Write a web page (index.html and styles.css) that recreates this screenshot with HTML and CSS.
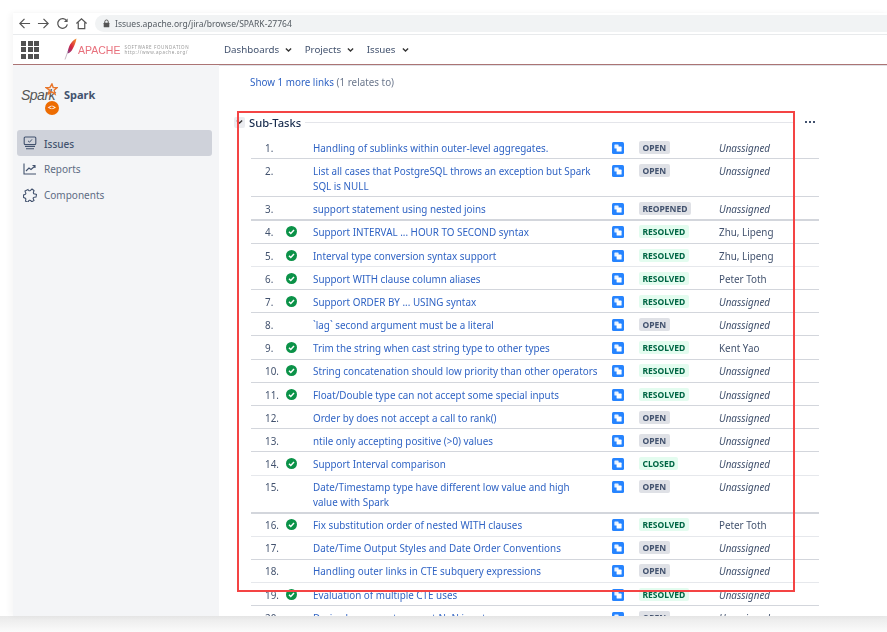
FILE: index.html
```html
<!DOCTYPE html>
<html lang="en">
<head>
<meta charset="utf-8">
<title>SPARK-27764</title>
<link rel="stylesheet" href="styles.css">
</head>
<body>
<svg class="defs" width="0" height="0" aria-hidden="true">
  <symbol id="story" viewBox="0 0 12 12"><rect width="12" height="12" rx="1.5" fill="#2684ff"/><rect x="2.4" y="2.4" width="4.2" height="4.2" rx=".6" fill="#fff" opacity=".9"/><rect x="4.6" y="4.6" width="5" height="5" rx=".6" fill="#fff"/></symbol>
  <symbol id="done" viewBox="0 0 11 11"><circle cx="5.5" cy="5.5" r="5.5" fill="#0b9248"/><path d="M3 5.7l1.8 1.8L8 4.1" fill="none" stroke="#fff" stroke-width="1.5"/></symbol>
  <symbol id="chev" viewBox="0 0 8 6"><path d="M1 1.2l3 3 3-3" fill="none" stroke="#333" stroke-width="1.5"/></symbol>
</svg>
<div class="window">
  <div class="toolbar">
    <svg class="nav" viewBox="0 0 14 14"><path d="M13 7H2M7 2L2 7l5 5" fill="none" stroke="#555" stroke-width="1.3"/></svg>
    <svg class="nav" viewBox="0 0 14 14"><path d="M1 7h11M7 2l5 5-5 5" fill="none" stroke="#555" stroke-width="1.3"/></svg>
    <svg class="nav" viewBox="0 0 14 14"><path d="M11.5 4.2A5.2 5.2 0 1 0 12.2 8" fill="none" stroke="#555" stroke-width="1.3"/><path d="M12.5 1.5v4h-4z" fill="#555"/></svg>
    <svg class="nav" viewBox="0 0 14 14"><path d="M1.5 7L7 2l5.5 5M3.5 6v6.5h7V6" fill="none" stroke="#555" stroke-width="1.3"/></svg>
    <div class="omnibox">
      <svg class="lock" viewBox="0 0 8 10"><path d="M2 4.500V3a2 2 0 0 1 4 0v1.500" fill="none" stroke="#555" stroke-width="1.100"/><rect x=".8" y="4" width="6.400" height="5.400" rx=".8" fill="#555"/></svg>
      <span class="url">Issues.apache.org/jira/browse/SPARK-27764</span>
    </div>
  </div>
  <header class="topbar">
    <div class="apps"><i></i><i></i><i></i><i></i><i></i><i></i><i></i><i></i><i></i></div>
    <div class="asf">
      <svg class="feather" viewBox="0 0 14 22"><defs><linearGradient id="fg" x1="0" y1="1" x2="1" y2="0"><stop offset="0" stop-color="#7b3a8c"/><stop offset=".45" stop-color="#d8263f"/><stop offset="1" stop-color="#f59a2c"/></linearGradient></defs><path d="M12.500.5C8.500 2 5.200 6.500 3.800 13l-.4 2.500c2.200-.5 4-2 5.200-4.500C10.500 8 11.800 4 12.500.5z" fill="url(#fg)"/><path d="M4 13L1 21.500" stroke="#b9a9b5" stroke-width=".8"/></svg>
      <span class="asf-name">APACHE</span>
      <span class="asf-sub"><span>SOFTWARE FOUNDATION</span><span>http://www.apache.org/</span></span>
    </div>
    <nav class="menu">
      <span class="menu-item">Dashboards <svg class="chev"><use href="#chev"/></svg></span>
      <span class="menu-item">Projects <svg class="chev"><use href="#chev"/></svg></span>
      <span class="menu-item">Issues <svg class="chev"><use href="#chev"/></svg></span>
    </nav>
  </header>
  <div class="body">
    <aside class="sidebar">
      <div class="project">
        <div class="spark-logo">
          <span class="spark-word">Spark</span>
          <svg class="spark-star" viewBox="0 0 14 14"><path d="M7.500 1l1.300 3.800 4.200.2-3.200 2.700 1.100 4.300-3.700-2.400-3.600 2.200 1.200-4.200L1 5l4.300-.2z" fill="none" stroke="#e8762b" stroke-width="1.500"/></svg>
          <span class="spark-badge">&lt;&gt;</span>
        </div>
        <span class="project-name">Spark</span>
      </div>
      <a class="side-item active">
        <svg class="side-icon" viewBox="0 0 14 14"><rect x="1.200" y="1" width="11.600" height="7.600" rx="1" fill="none" stroke="#42526e" stroke-width="1.100"/><path d="M5 4.800l1.500 1.400L9 3.400" fill="none" stroke="#42526e"/><path d="M2 10.500h10M3 12.800h8" stroke="#42526e" stroke-width="1.100"/></svg>
        <span class="side-label">Issues</span>
      </a>
      <a class="side-item">
        <svg class="side-icon" viewBox="0 0 14 14"><path d="M1 1.500V12h12" fill="none" stroke="#42526e" stroke-width="1.100"/><path d="M3 9l3-3 2 1.500L12 4M9.500 3.500H12V6" fill="none" stroke="#42526e" stroke-width="1.100"/></svg>
        <span>Reports</span>
      </a>
      <a class="side-item">
        <svg class="side-icon" viewBox="0 0 14 14"><path d="M5 1.500c.3 1.300 1.600 1.700 2.500.8L9 1l2 1.500-.6 2c-.2 1 .8 1.700 1.700 1.500l1.400.5-.5 2.500-1.800.2c-1 .2-1.300 1.300-.7 2l.5 1.300-2.200 1.200-1.200-1.200c-.8-.6-1.800-.3-2 .6l-.6 1.100-2.500-1 .3-1.800c.2-.9-.6-1.600-1.500-1.500L.5 9.500V7l1.500-.5c.9-.3 1.100-1.300.5-2L2 3z" fill="none" stroke="#42526e" stroke-width="1.100"/></svg>
        <span>Components</span>
      </a>
    </aside>
    <main class="content">
      <div class="more"><a class="link">Show 1 more links</a> <span class="muted">(1 relates to)</span></div>
      <div class="module-head">
        <span class="twisty"><svg class="chev"><use href="#chev"/></svg></span>
        <h2 class="module-title">Sub-Tasks</h2>
        <span class="module-rule"></span>
        <span class="dots"><i></i><i></i><i></i></span>
      </div>
      <div class="tasks">
        <div class="row"><span class="num">1.</span><span class="tick"></span><a class="link">Handling of sublinks within outer-level aggregates.</a><svg class="type"><use href="#story"/></svg><span class="cell-s"><span class="loz open">OPEN</span></span><span class="who none">Unassigned</span></div>
        <div class="row tall"><span class="num">2.</span><span class="tick"></span><a class="link">List all cases that PostgreSQL throws an exception but Spark SQL is NULL</a><svg class="type"><use href="#story"/></svg><span class="cell-s"><span class="loz open">OPEN</span></span><span class="who none">Unassigned</span></div>
        <div class="row thick"><span class="num">3.</span><span class="tick"></span><a class="link">support statement using nested joins</a><svg class="type"><use href="#story"/></svg><span class="cell-s"><span class="loz open">REOPENED</span></span><span class="who none">Unassigned</span></div>
        <div class="row up"><span class="num">4.</span><svg class="tick"><use href="#done"/></svg><a class="link">Support INTERVAL ... HOUR TO SECOND syntax</a><svg class="type"><use href="#story"/></svg><span class="cell-s"><span class="loz ok">RESOLVED</span></span><span class="who">Zhu, Lipeng</span></div>
        <div class="row faint"><span class="num">5.</span><svg class="tick"><use href="#done"/></svg><a class="link">Interval type conversion syntax support</a><svg class="type"><use href="#story"/></svg><span class="cell-s"><span class="loz ok">RESOLVED</span></span><span class="who">Zhu, Lipeng</span></div>
        <div class="row"><span class="num">6.</span><svg class="tick"><use href="#done"/></svg><a class="link">Support WITH clause column aliases</a><svg class="type"><use href="#story"/></svg><span class="cell-s"><span class="loz ok">RESOLVED</span></span><span class="who">Peter Toth</span></div>
        <div class="row"><span class="num">7.</span><svg class="tick"><use href="#done"/></svg><a class="link">Support ORDER BY ... USING syntax</a><svg class="type"><use href="#story"/></svg><span class="cell-s"><span class="loz ok">RESOLVED</span></span><span class="who none">Unassigned</span></div>
        <div class="row"><span class="num">8.</span><span class="tick"></span><a class="link">`lag` second argument must be a literal</a><svg class="type"><use href="#story"/></svg><span class="cell-s"><span class="loz open">OPEN</span></span><span class="who none">Unassigned</span></div>
        <div class="row wide"><span class="num">9.</span><svg class="tick"><use href="#done"/></svg><a class="link">Trim the string when cast string type to other types</a><svg class="type"><use href="#story"/></svg><span class="cell-s"><span class="loz ok">RESOLVED</span></span><span class="who">Kent Yao</span></div>
        <div class="row up"><span class="num">10.</span><svg class="tick"><use href="#done"/></svg><a class="link">String concatenation should low priority than other operators</a><svg class="type"><use href="#story"/></svg><span class="cell-s"><span class="loz ok">RESOLVED</span></span><span class="who none">Unassigned</span></div>
        <div class="row"><span class="num">11.</span><svg class="tick"><use href="#done"/></svg><a class="link">Float/Double type can not accept some special inputs</a><svg class="type"><use href="#story"/></svg><span class="cell-s"><span class="loz ok">RESOLVED</span></span><span class="who none">Unassigned</span></div>
        <div class="row"><span class="num">12.</span><span class="tick"></span><a class="link">Order by does not accept a call to rank()</a><svg class="type"><use href="#story"/></svg><span class="cell-s"><span class="loz open">OPEN</span></span><span class="who none">Unassigned</span></div>
        <div class="row"><span class="num">13.</span><span class="tick"></span><a class="link">ntile only accepting positive (&gt;0) values</a><svg class="type"><use href="#story"/></svg><span class="cell-s"><span class="loz open">OPEN</span></span><span class="who none">Unassigned</span></div>
        <div class="row wide faint"><span class="num">14.</span><svg class="tick"><use href="#done"/></svg><a class="link">Support Interval comparison</a><svg class="type"><use href="#story"/></svg><span class="cell-s"><span class="loz ok">CLOSED</span></span><span class="who none">Unassigned</span></div>
        <div class="row tall thick"><span class="num">15.</span><span class="tick"></span><a class="link">Date/Timestamp type have different low value and high<br>value with Spark</a><svg class="type"><use href="#story"/></svg><span class="cell-s"><span class="loz open">OPEN</span></span><span class="who none">Unassigned</span></div>
        <div class="row up faint"><span class="num">16.</span><svg class="tick"><use href="#done"/></svg><a class="link">Fix substitution order of nested WITH clauses</a><svg class="type"><use href="#story"/></svg><span class="cell-s"><span class="loz ok">RESOLVED</span></span><span class="who">Peter Toth</span></div>
        <div class="row up"><span class="num">17.</span><span class="tick"></span><a class="link">Date/Time Output Styles and Date Order Conventions</a><svg class="type"><use href="#story"/></svg><span class="cell-s"><span class="loz open">OPEN</span></span><span class="who none">Unassigned</span></div>
        <div class="row up faint"><span class="num">18.</span><span class="tick"></span><a class="link">Handling outer links in CTE subquery expressions</a><svg class="type"><use href="#story"/></svg><span class="cell-s"><span class="loz open">OPEN</span></span><span class="who none">Unassigned</span></div>
        <div class="row"><span class="num">19.</span><svg class="tick"><use href="#done"/></svg><a class="link">Evaluation of multiple CTE uses</a><svg class="type"><use href="#story"/></svg><span class="cell-s"><span class="loz ok">RESOLVED</span></span><span class="who none">Unassigned</span></div>
        <div class="row"><span class="num">20.</span><span class="tick"></span><a class="link">Derive base-count support NaN input</a><svg class="type"><use href="#story"/></svg><span class="cell-s"><span class="loz open">OPEN</span></span><span class="who none">Unassigned</span></div>
      </div>
    </main>
  </div>
  <div class="annotation"></div>
</div>
</body>
</html>
```
FILE: styles.css
```css
* { box-sizing: border-box; }
html, body { margin: 0; height: 100%; }
body {
  position: relative;
  height: 632px;
  overflow: hidden;
  padding: 13px 0 0 13px;
  background: linear-gradient(#fff 0, #fff 616px, #e9e9e9 616px, #fbfbfb 632px);
  font-family: "Noto Sans", "Open Sans", sans-serif;
  font-size: 9.850px;
  color: #172b4d;
}
.defs { position: absolute; }
.window {
  position: relative;
  width: 874px;
  height: 603px;
  overflow: hidden;
  background: #fff;
  box-shadow: -3px 0 6px rgba(0, 0, 0, .04), 0 -1px 2px rgba(0, 0, 0, .02);
  filter: blur(.3px);
}
.toolbar {
  display: flex;
  align-items: center;
  gap: 6px;
  height: 22px;
  padding: 2px 0 2px 5px;
  border-bottom: 1px solid #e8eaec;
}
.nav { width: 13px; height: 13px; flex: none; }
.omnibox {
  flex: 1;
  display: flex;
  align-items: center;
  gap: 5px;
  height: 17px;
  margin-left: 1px;
  padding-left: 8px;
  background: #f1f3f4;
  border-radius: 9px 0 0 9px;
}
.lock { width: 7px; height: 9px; }
.url { font-size: 8.550px; color: #555c63; }
.topbar {
  display: flex;
  align-items: center;
  height: 30px;
  border-bottom: 1px solid #ab7474;
}
.apps {
  display: grid;
  grid-template-columns: repeat(3, 5px);
  gap: 1.500px;
  margin-left: 8px;
}
.apps i { height: 5px; background: #505050; }
.asf { display: flex; align-items: center; margin-left: 25px; width: 160px; }
.feather { width: 14px; height: 22px; flex: none; margin-top: -2px; }
.asf-name { font-family: "Liberation Sans", sans-serif; font-size: 10.500px; color: #e8707c; margin-right: 4px; }
.asf-sub { display: flex; flex-direction: column; font-size: 4.500px; line-height: 5px; color: #999; letter-spacing: .6px; white-space: nowrap; }
.menu { display: flex; gap: 12.500px; }
.menu-item { display: flex; align-items: center; gap: 6px; font-size: 9.750px; color: #42526e; white-space: nowrap; }
.chev { width: 7px; height: 6px; }
.body { display: flex; height: 568px; }
.sidebar { flex: none; width: 206px; padding: 0 7px 0 4px; background: #f4f5f7; }
.project { display: flex; align-items: flex-start; height: 65px; padding: 16px 0 0 4px; }
.spark-logo { position: relative; width: 43px; height: 44px; }
.spark-word { display: block; font-family: "Liberation Sans", sans-serif; font-style: italic; font-weight: 400; font-size: 14px; line-height: 14px; margin-top: 7px; color: #555; letter-spacing: -.5px; }
.spark-star { position: absolute; left: 24px; top: 2px; width: 13px; height: 13px; }
.spark-badge {
  position: absolute; left: 24px; top: 20px;
  width: 14px; height: 14px;
  border-radius: 50%;
  background: #ed6c02;
  color: #fff;
  font-size: 7px;
  font-weight: 700;
  line-height: 13px;
  text-align: center;
}
.project-name { font-size: 11px; font-weight: 700; color: #42526e; margin-top: 6px; }
.side-item {
  display: flex;
  align-items: center;
  gap: 7px;
  height: 26px;
  padding-left: 6px;
  border-radius: 3px;
  font-size: 10px;
  color: #5e6c84;
}
.side-label { padding-top: 1px; }
.side-item.active { background: #cfd2da; color: #42526e; font-weight: 500; }
.side-icon { width: 14px; height: 14px; flex: none; }
.content { flex: 1; padding: 1px 68px 0 18px; position: relative; min-width: 0; border-top: 1px solid #dfe1e6; }
.more { margin: 7px 0 0 13px; height: 16px; line-height: 16px; }
.link { color: #2f63c4; padding-right: 14px; }
.more .link { padding-right: 0; }
.muted { color: #6b778c; }
.module-head { display: flex; align-items: center; height: 16px; margin: 24px 4px 0 -3px; }
.twisty { display: flex; align-items: center; justify-content: center; width: 11px; height: 11px; background: #ebecf0; border-radius: 2px; margin-right: 4px; }
.module-title { margin: 0; font-size: 11.200px; font-weight: 500; color: #172b4d; }
.module-rule { flex: 1; height: 1px; margin: 0 12px 0 4px; background: #e4e5ea; }
.dots { display: flex; gap: 2px; }
.dots i { width: 2px; height: 2px; background: #42526e; }
.tasks { margin: 6px 0 0 14px; }
.row {
  display: grid;
  grid-template-columns: 35px 27px 299px 27px 80px 1fr;
  height: 23px;
  padding-top: 5px;
  border-bottom: 1px solid #d3d6dc;
  line-height: 15px;
}
.row.up { padding-top: 4px; }
.row.wide { height: 24px; }
.row.tall { height: 38px; }
.row.thick { height: 24px; border-bottom: 2px solid #d3d6dc; }
.row.tall.thick { height: 38px; padding-top: 4px; }
.row.faint { border-bottom-color: #e6e8ec; }
.num { padding-left: 14px; color: #42526e; }
.tick { width: 11px; height: 11px; margin-top: 1px; display: block; }
.type { width: 12px; height: 12px; margin-top: 1px; }
.loz {
  display: inline-block;
  height: 13px;
  padding: 0 3.500px;
  border-radius: 2px;
  font-size: 8.500px;
  font-weight: 700;
  line-height: 13px;
  vertical-align: top;
}
.open { background: #dfe1e6; color: #42526e; }
.ok { background: #e3fcef; color: #006644; }
.who { color: #42526e; }
.none { font-style: italic; }
.annotation {
  position: absolute;
  left: 224px;
  top: 98px;
  width: 558px;
  height: 481px;
  border: 2px solid #f44444;
}
```
